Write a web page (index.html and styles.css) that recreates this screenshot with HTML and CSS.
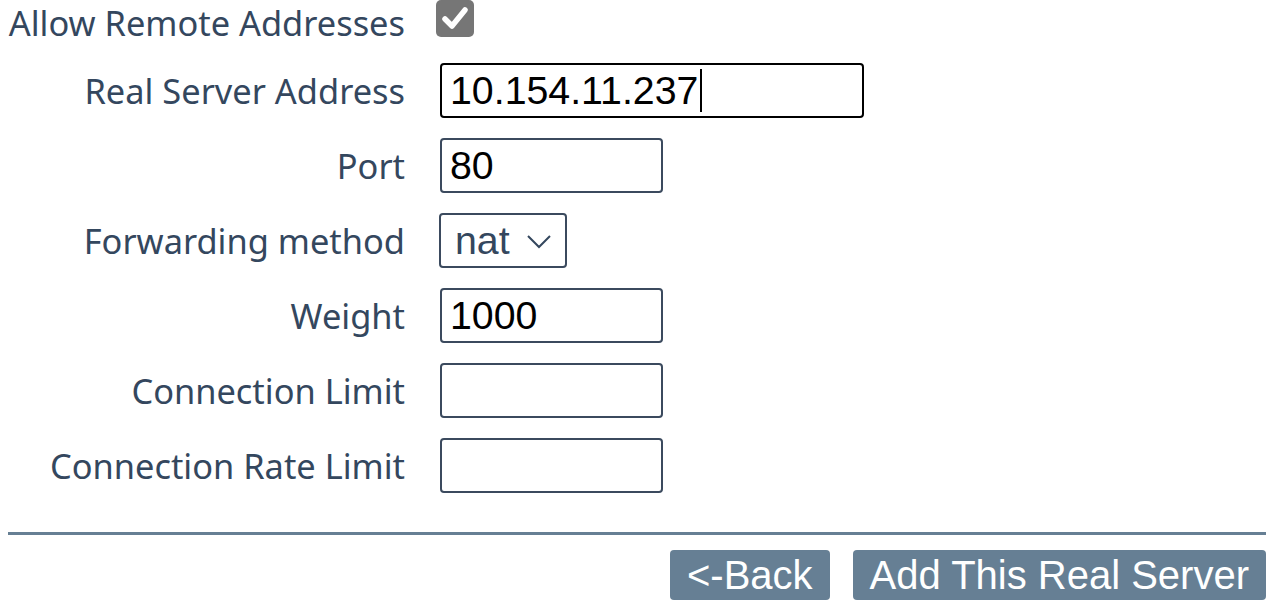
FILE: index.html
```html
<!DOCTYPE html>
<html>
<head>
<meta charset="utf-8">
<link rel="stylesheet" href="styles.css">
</head>
<body>
<div class="page">
  <div class="form">
    <div class="label">Allow Remote Addresses</div>
    <div class="cell cell-check">
      <span class="check"><svg viewBox="0 0 38 37" width="38" height="37"><path d="M9 19 L16 26 L29 10" fill="none" stroke="#fff" stroke-width="5.5" stroke-linecap="round" stroke-linejoin="round"/></svg></span>
    </div>

    <div class="label">Real Server Address</div>
    <div class="cell"><div class="field field-wide field-focus"><span>10.154.11.237</span><span class="caret"></span></div></div>

    <div class="label">Port</div>
    <div class="cell"><div class="field">80</div></div>

    <div class="label">Forwarding method</div>
    <div class="cell"><div class="select"><span>nat</span><svg class="chev" viewBox="0 0 24 14" width="24" height="14"><path d="M1 1 L12 12 L23 1" fill="none" stroke="#34475e" stroke-width="2"/></svg></div></div>

    <div class="label">Weight</div>
    <div class="cell"><div class="field">1000</div></div>

    <div class="label">Connection Limit</div>
    <div class="cell"><div class="field"></div></div>

    <div class="label">Connection Rate Limit</div>
    <div class="cell"><div class="field"></div></div>
  </div>
  <div class="rule"></div>
  <div class="actions">
    <button class="btn">&lt;-Back</button>
    <button class="btn">Add This Real Server</button>
  </div>
</div>
</body>
</html>
```
FILE: styles.css
```css
html, body {
  margin: 0;
  padding: 0;
  background: #fff;
}
.page {
  width: 1258px;
  margin-left: 8px;
}
.form {
  display: grid;
  grid-template-columns: 397px auto;
  grid-template-rows: 40px repeat(6, 55px);
  column-gap: 35px;
  row-gap: 20px;
  align-items: center;
  padding-top: 3px;
  font-family: "Noto Sans", "Open Sans", sans-serif;
}
.label {
  text-align: right;
  font-size: 34.4px;
  color: #34475e;
  line-height: 40px;
  white-space: nowrap;
}
.cell {
  display: flex;
  align-items: center;
  height: 100%;
}
.cell-check {
  align-items: flex-start;
}
.check {
  display: block;
  width: 38px;
  height: 37px;
  margin-left: -4px;
  margin-top: -3px;
  background: #767676;
  border-radius: 5px;
}
.check svg { display: block; }
.field {
  box-sizing: border-box;
  width: 223px;
  height: 55px;
  border: 2px solid #3b4a5e;
  border-radius: 4px;
  padding: 0 8px;
  display: flex;
  align-items: center;
  font-family: "Liberation Sans", Arial, sans-serif;
  font-size: 39.3px;
  color: #000;
}
.field-wide {
  width: 424px;
}
.field-focus {
  border-color: #000;
}
.caret {
  display: inline-block;
  width: 2px;
  height: 43px;
  background: #000;
  margin-left: 2px;
}
.select {
  box-sizing: border-box;
  width: 128px;
  height: 55px;
  margin-left: -1px;
  border: 2px solid #3b4a5e;
  border-radius: 4px;
  padding: 0 14px;
  display: flex;
  align-items: center;
  justify-content: space-between;
  font-family: "Liberation Sans", Arial, sans-serif;
  font-size: 39.3px;
  color: #34475e;
}
.chev {
  display: block;
  margin-top: 2px;
}
.rule {
  height: 3px;
  background: #667f94;
  margin-top: 39px;
}
.actions {
  display: flex;
  justify-content: flex-end;
  gap: 23px;
  margin-top: 15px;
}
.btn {
  height: 50px;
  padding: 0 17px;
  border: none;
  border-radius: 4px;
  background: #667f94;
  color: #fff;
  font-family: "Liberation Sans", Arial, sans-serif;
  font-size: 40px;
  line-height: 50px;
}
```
